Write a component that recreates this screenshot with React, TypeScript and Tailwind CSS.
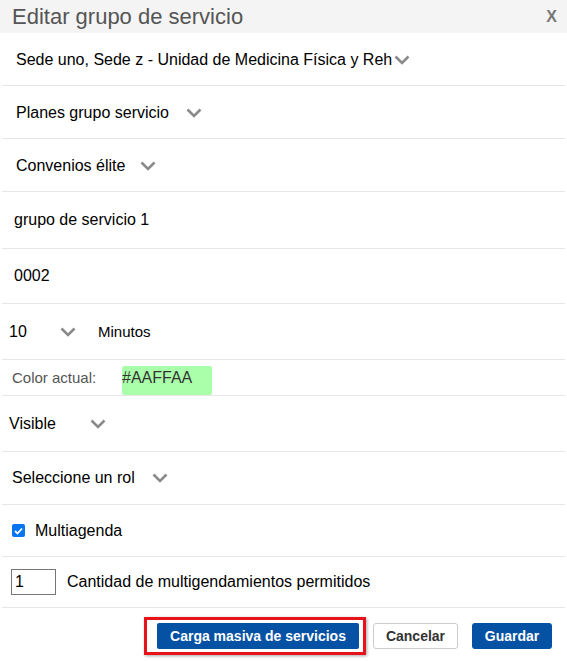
import React from 'react'

const font = { fontFamily: '"Liberation Sans", Arial, sans-serif' }

function Chevron({ className = '' }: { className?: string }) {
  return (
    <svg width="16" height="10" viewBox="0 0 16 10" className={className}>
      <polyline points="1.5,1.5 8,8 14.5,1.5" fill="none" stroke="#8a8a8a" strokeWidth="2.6" />
    </svg>
  )
}

function Row({ h, className = '', children }: { h: string; className?: string; children: React.ReactNode }) {
  return <div className={`flex items-center border-b border-[#e6e6e6] ${h} ${className}`}>{children}</div>
}

export default function App() {
  return (
    <div className="w-[567px] h-[661px] bg-white text-black overflow-hidden" style={font}>
      {/* cabecera */}
      <div className="flex h-[33px] items-center justify-between bg-[#f4f4f4] pl-[12px] pr-[10px]">
        <span className="text-[22px] leading-none text-[#555]">Editar grupo de servicio</span>
        <span className="text-[16px] font-bold leading-none text-[#777]">X</span>
      </div>

      <div className="px-[2px] text-[16px] leading-none">
        <Row h="h-[53px]" className="pl-[14px] pt-[2px]">
          <span className="w-[377px] whitespace-nowrap">Sede uno, Sede z - Unidad de Medicina Física y Reh</span>
          <Chevron className="ml-[1px]" />
        </Row>
        <Row h="h-[53px]" className="pl-[14px] pt-[2px]">
          <span>Planes grupo servicio</span>
          <Chevron className="ml-[17px]" />
        </Row>
        <Row h="h-[53px]" className="pl-[14px] pt-[2px]">
          <span>Convenios élite</span>
          <Chevron className="ml-[15px]" />
        </Row>
        <Row h="h-[57px]" className="pl-[12px]">
          <span>grupo de servicio 1</span>
        </Row>
        <Row h="h-[55px]" className="pl-[12px]">
          <span>0002</span>
        </Row>
        <Row h="h-[56px]" className="pl-[7px]">
          <span className="w-[51px]">10</span>
          <Chevron />
          <span className="ml-[22px] text-[15px]">Minutos</span>
        </Row>
        <Row h="h-[36px]" className="pl-[10px]">
          <span className="w-[110px] text-[15px] text-[#555]">Color actual:</span>
          <span className="mt-[6px] flex h-[29px] w-[90px] items-start rounded-[2px] bg-[#aaffaa] pt-[4px] text-[#333]">
            #AAFFAA
          </span>
        </Row>
        <Row h="h-[56px]" className="pl-[7px]">
          <span className="w-[81px]">Visible</span>
          <Chevron />
        </Row>
        <Row h="h-[53px]" className="pl-[10px]">
          <span>Seleccione un rol</span>
          <Chevron className="ml-[17px]" />
        </Row>
        <Row h="h-[52px]" className="pl-[10px]">
          <span className="flex h-[13px] w-[13px] items-center justify-center rounded-[2px] bg-[#0a75f0]">
            <svg width="9" height="8" viewBox="0 0 9 8">
              <polyline points="1,4 3.5,6.5 8,1.5" fill="none" stroke="white" strokeWidth="1.8" />
            </svg>
          </span>
          <span className="ml-[10px]">Multiagenda</span>
        </Row>
        <Row h="h-[51px]" className="pl-[9px]">
          <span className="flex h-[26px] w-[45px] items-center border border-[#767676] pl-[3px]">1</span>
          <span className="ml-[11px]">Cantidad de multigendamientos permitidos</span>
        </Row>
      </div>

      {/* acciones */}
      <div className="flex justify-end gap-[14px] pr-[15px] pt-[15px] text-[14px] font-bold leading-none">
        <div className="relative">
          <button className="h-[26px] w-[202px] rounded-[2px] bg-[#0552a4] text-white">
            Carga masiva de servicios
          </button>
          <div className="absolute -left-[13px] -top-[6px] h-[38px] w-[222px] border-[3px] border-[#e8121b] shadow-[1px_1px_3px_rgba(0,0,0,0.35)]" />
        </div>
        <button className="h-[26px] w-[85px] rounded-[3px] border border-[#cccccc] bg-white text-[#333]">
          Cancelar
        </button>
        <button className="h-[26px] w-[80px] rounded-[3px] bg-[#0552a4] text-white">Guardar</button>
      </div>
    </div>
  )
}
